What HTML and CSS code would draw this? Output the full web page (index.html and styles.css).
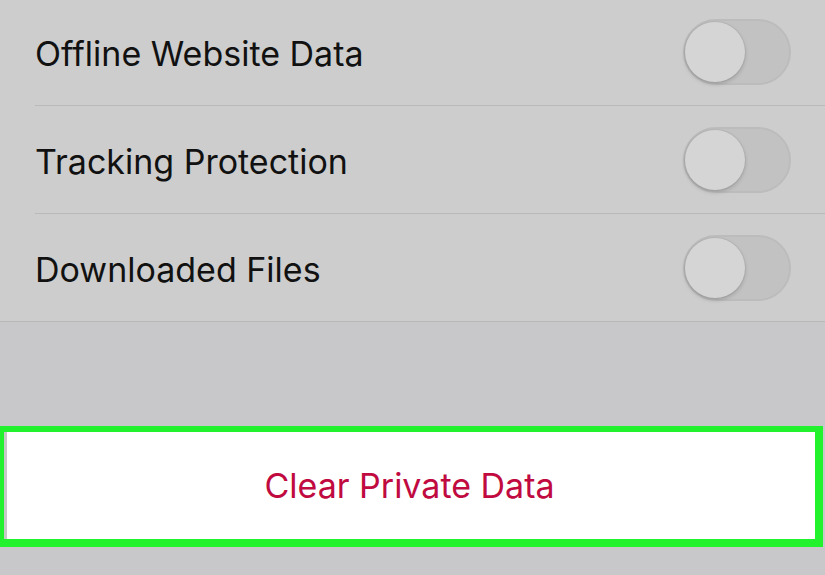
FILE: index.html
```html
<!DOCTYPE html>
<html lang="en">
<head>
<meta charset="utf-8">
<title>Clear Private Data</title>
<link rel="stylesheet" href="styles.css">
</head>
<body>
<main class="screen">
  <ul class="list">
    <li class="row">
      <div class="row-inner">
        <span class="label">Offline Website Data</span>
        <span class="toggle"><span class="knob"></span></span>
      </div>
    </li>
    <li class="row">
      <div class="row-inner">
        <span class="label">Tracking Protection</span>
        <span class="toggle"><span class="knob"></span></span>
      </div>
    </li>
    <li class="row">
      <div class="row-inner last">
        <span class="label">Downloaded Files</span>
        <span class="toggle"><span class="knob"></span></span>
      </div>
    </li>
  </ul>
  <div class="spacer"></div>
  <button class="clear-btn" type="button">Clear Private Data</button>
</main>
</body>
</html>
```
FILE: styles.css
```css
html, body {
  margin: 0;
  padding: 0;
  background: #c8c8cb;
  width: 825px;
  height: 575px;
  overflow: hidden;
}
.screen {
  font-family: "Inter", "Liberation Sans", sans-serif;
  display: flex;
  flex-direction: column;
}
.list {
  list-style: none;
  margin: -2px 0 0 0;
  padding: 0;
  background: #cdcdcd;
  border-bottom: 1px solid #b8b8b8;
}
.row {
  padding-left: 35px;
}
.row-inner {
  height: 107px;
  display: flex;
  align-items: center;
  justify-content: space-between;
  padding-right: 34px;
  border-bottom: 1px solid #b9b9b9;
}
.row-inner.last {
  border-bottom: none;
}
.label {
  font-size: 34px;
  color: #111111;
  letter-spacing: 0;
  padding-top: 4px;
}
.toggle {
  width: 104px;
  height: 62px;
  border-radius: 33px;
  background: #c2c2c2;
  border: 2px solid #bcbcbc;
  display: flex;
  align-items: center;
}
.knob {
  width: 60px;
  height: 60px;
  border-radius: 50%;
  background: #d5d5d5;
  box-shadow: 0 2px 4px rgba(0, 0, 0, 0.18), 0 0 0 1px rgba(0, 0, 0, 0.04);
}
.spacer {
  height: 104px;
}
.clear-btn {
  margin: 0 2px 0 0;
  height: 121px;
  border-style: solid;
  border-color: #22f22e;
  border-width: 6px 8px 8px 4px;
  background: #ffffff;
  box-shadow: inset 3px 0 0 #c8c8c8;
  font-family: "Inter", "Liberation Sans", sans-serif;
  font-size: 34px;
  color: #c00a40;
  text-align: center;
  padding: 0;
  cursor: pointer;
}
```
